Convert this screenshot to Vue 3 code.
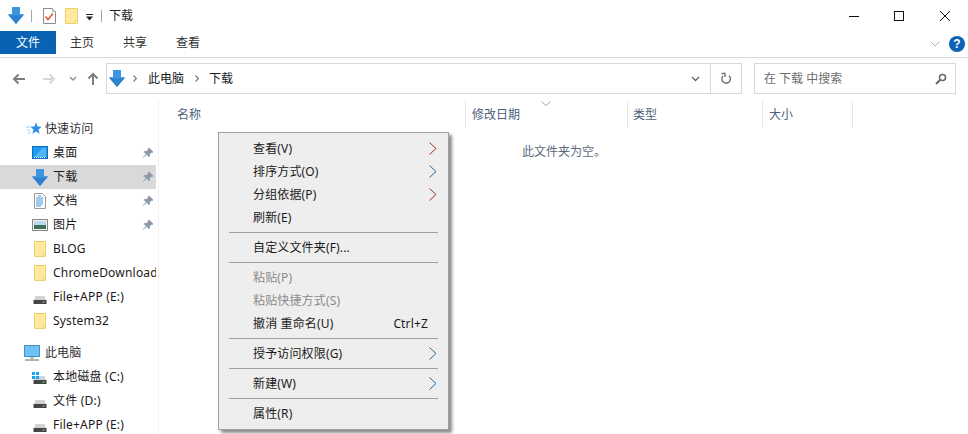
<script setup>
const quick = [
  { label: '桌面', icon: 'desktop', pin: true },
  { label: '下载', icon: 'down', pin: true, active: true },
  { label: '文档', icon: 'doc', pin: true },
  { label: '图片', icon: 'pic', pin: true },
  { label: 'BLOG', icon: 'folder' },
  { label: 'ChromeDownload', icon: 'folder' },
  { label: 'File+APP (E:)', icon: 'drive' },
  { label: 'System32', icon: 'folder' }
]
const pc = [
  { label: '本地磁盘 (C:)', icon: 'win' },
  { label: '文件 (D:)', icon: 'drive' },
  { label: 'File+APP (E:)', icon: 'drive' }
]
const cols = [
  { label: '名称', w: 307, pad: 18 },
  { label: '修改日期', w: 162, pad: 6 },
  { label: '类型', w: 135, pad: 5 },
  { label: '大小', w: 90, pad: 6 }
]
const menu = [
  { t: '查看(V)', arrow: '#a02c2c' },
  { t: '排序方式(O)', arrow: '#1f6aa5' },
  { t: '分组依据(P)', arrow: '#a02c2c' },
  { t: '刷新(E)' },
  { sep: true },
  { t: '自定义文件夹(F)...' },
  { sep: true },
  { t: '粘贴(P)', off: true },
  { t: '粘贴快捷方式(S)', off: true },
  { t: '撤消 重命名(U)', key: 'Ctrl+Z' },
  { sep: true },
  { t: '授予访问权限(G)', arrow: '#1f6aa5' },
  { sep: true },
  { t: '新建(W)', arrow: '#1f6aa5' },
  { sep: true },
  { t: '属性(R)' }
]
</script>

<template>
  <div class="win">
    <svg width="0" height="0" class="defs">
      <defs>
        <symbol id="i-down" viewBox="0 0 16 17">
          <path d="M4 0h8v7.5h4L8 17 0 7.5h4z" fill="#3f94e0"/>
          <path d="M0 7.5h4v1h8v-1h4L8 17z" fill="#2f80cf"/>
        </symbol>
        <symbol id="i-folder" viewBox="0 0 16 16">
          <path d="M2.500 .5H13.500V15.500H2.500z" fill="#ffe9a0" stroke="#f0d068"/>
          <path d="M11.500 15.500V12.500H13.500V15.500" fill="#fff3c4" stroke="#f0d068"/>
        </symbol>
        <symbol id="i-drive" viewBox="0 0 16 16">
          <path d="M3.500 7h9l1.500 4H2z" fill="#d2d2d2"/>
          <rect x="1.500" y="11" width="13" height="4" fill="#444"/>
          <rect x="10.500" y="12.500" width="2" height="1" fill="#72e072"/>
        </symbol>
        <symbol id="i-pin" viewBox="0 0 12 12">
          <path d="M7 .5l4.500 4.500-1 .7-.8-.3-2 2 .2 1.800-1 1-2.100-2.400L1 11l-.3-.3 3.200-3.600L1.500 5l1-1 1.800.2 2-2-.3-.8z" fill="#8d99a5"/>
        </symbol>
      </defs>
    </svg>

    <header class="title">
      <svg class="ic16" width="16" height="17"><use href="#i-down"/></svg>
      <i class="vbar"></i>
      <svg class="qa-note" width="13" height="16" viewBox="0 0 13 16">
        <path d="M.5 .5h9l3 3v12H.5z" fill="#fff" stroke="#8a8a8a"/>
        <path d="M9.500 .5v3h3" fill="#e8e8e8" stroke="#b0b0b0"/>
        <path d="M2.500 8.500l2.500 3 5-6" fill="none" stroke="#e2562a" stroke-width="1.500"/>
      </svg>
      <svg class="qa-folder" width="14" height="16" viewBox="0 0 14 16">
        <path d="M.5 .5h12v15H.5z" fill="#ffe9a0" stroke="#f0d068"/>
        <path d="M10.500 15.500v-3h2v3" fill="#fff3c4" stroke="#f0d068"/>
      </svg>
      <svg class="qa-drop" width="7" height="7" viewBox="0 0 7 7">
        <rect x="0" y="0" width="7" height="1" fill="#222"/>
        <path d="M0 2.500h7L3.500 6.500z" fill="#222"/>
      </svg>
      <i class="vbar vbar2"></i>
      <span class="title-text">下载</span>
      <span class="grow"></span>
      <div class="caps">
        <svg width="46" height="30" viewBox="0 0 46 30"><path d="M19 15.500h10" stroke="#111" fill="none"/></svg>
        <svg width="46" height="30" viewBox="0 0 46 30"><rect x="18.500" y="10.500" width="9" height="9" stroke="#111" fill="none"/></svg>
        <svg width="46" height="30" viewBox="0 0 46 30"><path d="M18 10l10 10M28 10L18 20" stroke="#111" fill="none"/></svg>
      </div>
    </header>

    <nav class="ribbon">
      <span class="tab tab-file">文件</span>
      <span class="tab">主页</span>
      <span class="tab">共享</span>
      <span class="tab">查看</span>
      <span class="grow"></span>
      <svg class="rib-chev" width="10" height="6" viewBox="0 0 10 6"><path d="M.5 .5L5 5 9.500 .5" stroke="#b4b4b4" fill="none"/></svg>
      <span class="help">?</span>
    </nav>

    <section class="addr-row">
      <div class="nav-btns">
        <svg width="14" height="12" viewBox="0 0 14 12"><path d="M13 6H2M6.500 1.500L2 6l4.500 4.500" fill="none" stroke="#7d7d7d" stroke-width="2"/></svg>
        <svg width="14" height="12" viewBox="0 0 14 12"><path d="M1 6h11M7.500 1.500L12 6l-4.500 4.500" fill="none" stroke="#d6d6d6" stroke-width="2"/></svg>
        <svg width="8" height="5" viewBox="0 0 8 5"><path d="M1 1l3 3 3-3" fill="none" stroke="#8a8a8a" stroke-width="1.300"/></svg>
        <svg width="12" height="14" viewBox="0 0 12 14"><path d="M6 13V2M1.500 6.500L6 2l4.500 4.500" fill="none" stroke="#7d7d7d" stroke-width="2"/></svg>
      </div>
      <div class="addr">
        <svg width="16" height="17"><use href="#i-down"/></svg>
        <svg class="crumb-sep first" width="4" height="7" viewBox="0 0 4 7"><path d="M.5 .5l3 3-3 3" fill="none" stroke="#777" stroke-width="1.200"/></svg>
        <span class="crumb">此电脑</span>
        <svg class="crumb-sep" width="4" height="7" viewBox="0 0 4 7"><path d="M.5 .5l3 3-3 3" fill="none" stroke="#777" stroke-width="1.200"/></svg>
        <span class="crumb">下载</span>
        <span class="grow"></span>
        <svg class="addr-chev" width="9" height="6" viewBox="0 0 9 6"><path d="M1 1l3.500 3.500L8 1" fill="none" stroke="#666" stroke-width="1.300"/></svg>
        <span class="refresh">
          <svg width="12" height="13" viewBox="0 0 12 13"><path d="M3 3.500a4.300 4.300 0 1 0 6-.3M1.500 1h3.500v3.500" transform="translate(0 .5)" fill="none" stroke="#707070" stroke-width="1.400"/></svg>
        </span>
      </div>
      <div class="search">
        <span>在 下载 中搜索</span>
        <span class="grow"></span>
        <svg width="12" height="12" viewBox="0 0 12 12"><circle cx="7.500" cy="4.500" r="3" fill="none" stroke="#666" stroke-width="1.500"/><path d="M5 7l-4 4" stroke="#666" stroke-width="2"/></svg>
      </div>
    </section>

    <main class="body">
      <aside class="side">
        <div class="group-head head-quick">
          <svg width="16" height="14" viewBox="0 0 16 14"><path d="M10 .5l1.600 4 4.200.3-3.300 2.700 1.100 4.200L10 9.400l-3.600 2.300 1.100-4.200-3.300-2.700 4.200-.3z" fill="#2f8fe0"/><path d="M0 5h4M1 8h3M2 11h3" stroke="#9cc8ee"/></svg>
          <span>快速访问</span>
        </div>
        <div v-for="q in quick" :key="q.label" class="row" :class="{ active: q.active }">
          <svg v-if="q.icon === 'desktop'" class="ico" width="16" height="14" viewBox="0 0 16 14"><rect x=".5" y=".5" width="15" height="12" fill="#1e9cf0" stroke="#0e6fc0"/><path d="M2 11l9-9h3v9z" fill="#4fb6f5"/><path d="M2 11.500h12" stroke="#fff" stroke-dasharray="1 1"/></svg>
          <svg v-else-if="q.icon === 'doc'" class="ico" width="16" height="16" viewBox="0 0 16 16"><path d="M2.500 .5h8l3 3v12h-11z" fill="#fff" stroke="#9a9a9a"/><path d="M6 3h3M4 5h7M4 7h7M4 9h7M4 11h7M4 13h5" stroke="#3f97d8"/></svg>
          <svg v-else-if="q.icon === 'pic'" class="ico" width="16" height="12" viewBox="0 0 16 12"><rect x=".5" y=".5" width="15" height="11" fill="#f4f4f4" stroke="#8a8a8a"/><rect x="2" y="2" width="12" height="4" fill="#bcd9ee"/><rect x="2" y="6" width="12" height="4" fill="#3f6f58"/></svg>
          <svg v-else class="ico" width="16" :height="q.icon === 'down' ? 17 : 16"><use :href="'#i-' + q.icon"/></svg>
          <span class="row-label">{{ q.label }}</span>
          <svg v-if="q.pin" class="pin" width="12" height="12"><use href="#i-pin"/></svg>
        </div>
        <div class="group-head head-pc">
          <svg width="16" height="16" viewBox="0 0 16 16"><rect x=".5" y=".5" width="15" height="11" fill="#6cc4f4" stroke="#4a90b8"/><path d="M1 15h14" stroke="#9a9a9a" stroke-width="1.500"/><path d="M6 12h4v2H6z" fill="#b8c4cc"/></svg>
          <span>此电脑</span>
        </div>
        <div v-for="p in pc" :key="p.label + p.icon" class="row">
          <span class="ico-wrap">
            <svg class="ico" width="16" height="16"><use href="#i-drive"/></svg>
            <svg v-if="p.icon === 'win'" class="winlogo" width="7" height="7" viewBox="0 0 7 7"><path d="M0 0h3v3H0zM4 0h3v3H4zM0 4h3v3H0zM4 4h3v3H4z" fill="#16a6f0"/></svg>
          </span>
          <span class="row-label">{{ p.label }}</span>
        </div>
      </aside>

      <section class="list">
        <div class="cols">
          <div v-for="c in cols" :key="c.label" class="col" :style="{ width: c.w + 'px', paddingLeft: c.pad + 'px' }">{{ c.label }}</div>
          <svg class="sort" width="10" height="5" viewBox="0 0 10 5"><path d="M.5 .5L5 4.500 9.500 .5" stroke="#a8a8a8" fill="none"/></svg>
        </div>
        <div class="empty">此文件夹为空。</div>
      </section>

      <div class="menu">
        <template v-for="(m, i) in menu" :key="i">
          <div v-if="m.sep" class="msep"></div>
          <div v-else class="mitem" :class="{ off: m.off }">
            <span>{{ m.t }}</span>
            <span class="grow"></span>
            <span v-if="m.key" class="mkey">{{ m.key }}</span>
            <svg v-if="m.arrow" class="marrow" width="8" height="13" viewBox="0 0 8 13"><path d="M.5 .5l6.500 6-6.500 6" fill="none" :stroke="m.arrow"/></svg>
          </div>
        </template>
      </div>
    </main>
  </div>
</template>

<style scoped>
.win {
  width: 968px;
  height: 434px;
  overflow: hidden;
  background: #fff;
  color: #1a1a1a;
  font: 12px/16px "Noto Sans", "Noto Sans CJK SC", sans-serif;
  display: flex;
  flex-direction: column;
}
.defs { position: absolute; }
.grow { flex: 1; }
.title { height: 31px; display: flex; align-items: center; padding-left: 8px; box-sizing: border-box; }
.ic16 { flex: none; }
.vbar { width: 1px; height: 12px; background: #a8a8a8; margin-left: 7px; }
.qa-note { margin-left: 11px; }
.qa-folder { margin-left: 9px; }
.qa-drop { margin-left: 7px; margin-top: 3px; }
.vbar2 { margin-left: 8px; }
.title-text { margin-left: 7px; color: #222; }
.caps { display: flex; height: 30px; }
.ribbon { height: 26px; display: flex; align-items: flex-start; border-bottom: 1px solid #dadada; }
.tab { width: 53px; height: 23px; line-height: 24px; padding-left: 14px; box-sizing: border-box; color: #333; }
.tab-file { width: 56px; padding-left: 16px; background: #0863b5; color: #fff; }
.rib-chev { margin: 10px 9px 0 0; }
.help {
  width: 16px; height: 16px; border-radius: 50%; background: #0d62b8; color: #fff;
  margin: 5px 3px 0 0; text-align: center; font: bold 12px/16px "Liberation Sans", sans-serif;
}
.addr-row { height: 36px; display: flex; padding-top: 5px; }
.nav-btns { width: 106px; height: 31px; display: flex; align-items: center; padding-left: 12px; box-sizing: border-box; }
.nav-btns svg:nth-child(2) { margin-left: 16px; }
.nav-btns svg:nth-child(3) { margin-left: 13px; }
.nav-btns svg:nth-child(4) { margin-left: 10px; }
.addr {
  width: 636px; height: 31px; box-sizing: border-box; border: 1px solid #d9d9d9;
  display: flex; align-items: center; padding-left: 2px;
}
.crumb-sep { margin: 0 10px 0 11px; }
.crumb-sep.first { margin: 0 11px 0 8px; }
.addr-chev { margin-right: 10px; }
.refresh { width: 31px; height: 29px; border-left: 1px solid #d9d9d9; display: flex; align-items: center; justify-content: center; box-sizing: border-box; }
.search {
  width: 202px; height: 31px; margin-left: 12px; box-sizing: border-box; border: 1px solid #d9d9d9;
  display: flex; align-items: center; padding: 0 8px 0 9px; color: #6d6d6d;
}
.body { flex: 1; display: flex; position: relative; min-height: 0; }
.side { width: 159px; box-sizing: border-box; border-right: 1px solid #f2f2f2; padding-top: 18px; flex: none; }
.group-head { height: 24px; display: flex; align-items: center; gap: 5px; padding-left: 24px; color: #333; letter-spacing: .1px; }
.head-quick { padding-left: 26px; gap: 3px; }
.head-pc { margin-top: 8px; }
.row { height: 24px; width: 156px; display: flex; align-items: center; padding-left: 32px; box-sizing: border-box; position: relative; white-space: nowrap; overflow: hidden; }
.row.active { background: #d9d9d9; }
.ico-wrap { position: relative; width: 16px; height: 16px; display: block; flex: none; }
.ico { flex: none; display: block; }
.winlogo { position: absolute; left: 0; top: 3px; }
.row-label { margin-left: 5px; color: #1a1a1a; flex: none; letter-spacing: .2px; }
.pin { position: absolute; left: 142px; top: 6px; }
.list { flex: 1; padding-top: 2px; position: relative; }
.cols { height: 27px; display: flex; position: relative; }
.col { box-sizing: border-box; height: 27px; line-height: 28px; border-right: 1px solid #e5e5e5; color: #4c607a; }
.sort { position: absolute; left: 382px; top: 0; }
.empty { margin: 16px 0 0 363px; color: #5a6a7a; }
.menu {
  position: absolute; left: 218px; top: 33px; width: 231px; box-sizing: border-box;
  background: #eeeeee; border: 1px solid #a0a0a0; padding: 4px 0;
  box-shadow: 3px 3px 3px rgba(0,0,0,.45);
}
.mitem { height: 23px; display: flex; align-items: center; padding: 0 11px 0 34px; color: #1a1a1a; letter-spacing: .15px; }
.mitem.off { color: #8a8a8a; }
.msep { height: 1px; background: #a0a0a0; margin: 3px 10px; }
.mkey { margin-right: 9px; }
</style>
